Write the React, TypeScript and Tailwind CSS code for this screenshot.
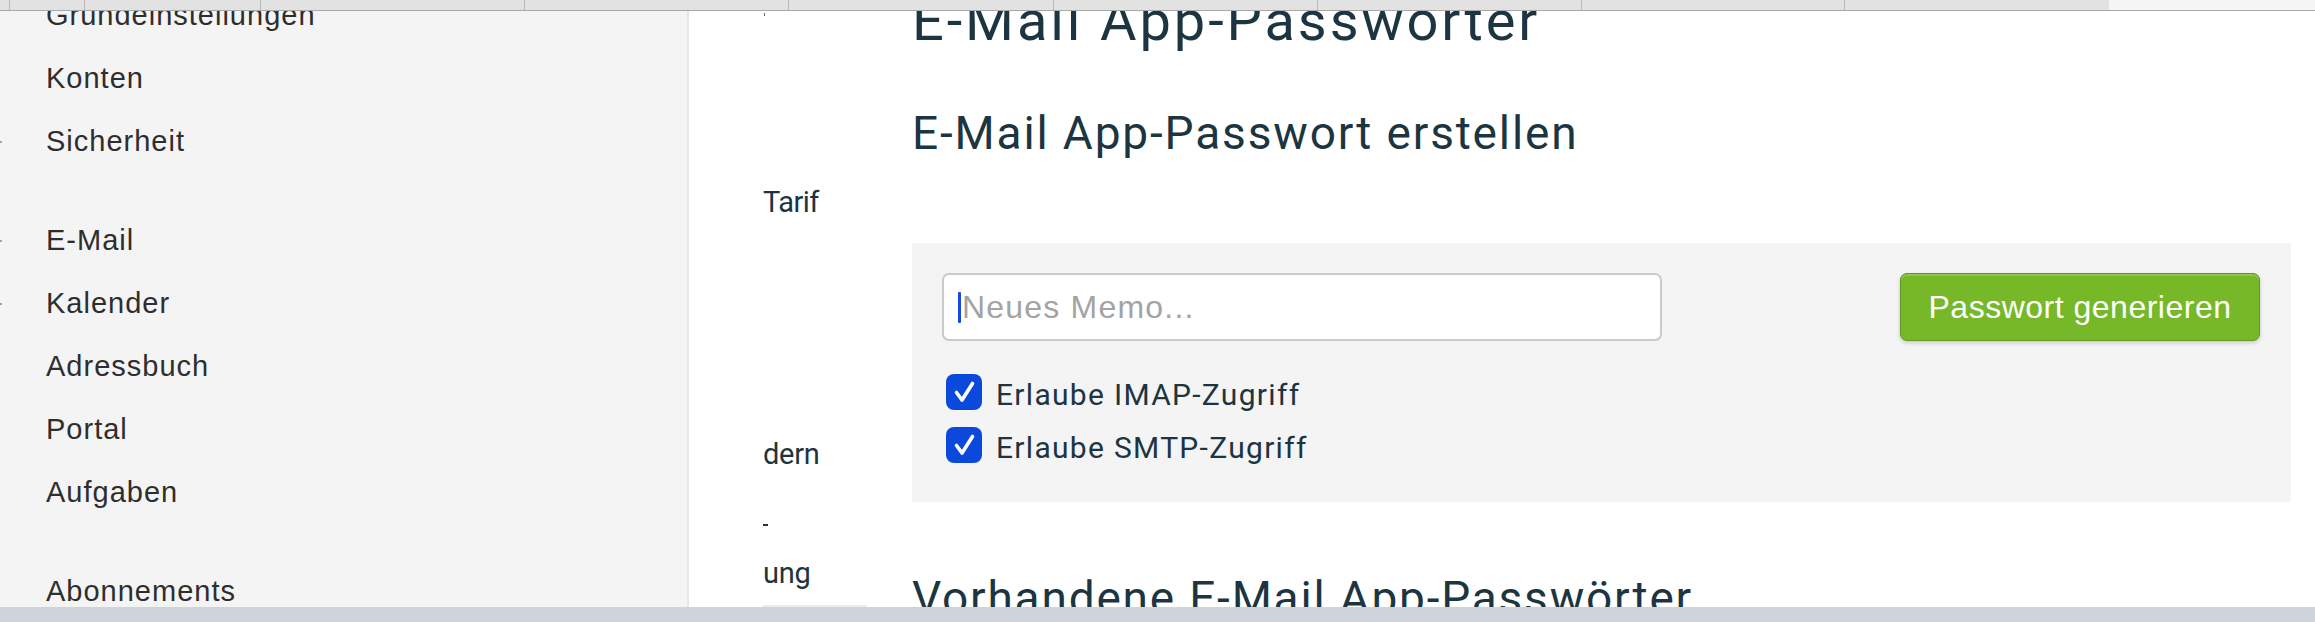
import React from "react";

const tabs: { w: string; noBorder?: boolean }[] = [
  { w: "w-[10px]" },
  { w: "w-[75px]" },
  { w: "w-[176px]" },
  { w: "w-[264px]" },
  { w: "w-[264px]" },
  { w: "w-[265px]" },
  { w: "w-[264px]" },
  { w: "w-[264px]" },
  { w: "w-[263px]" },
  { w: "w-[264px]", noBorder: true },
];

type Item = { label: string; dot?: boolean; gapBefore?: boolean };
const items: Item[] = [
  { label: "Grundeinstellungen" },
  { label: "Konten" },
  { label: "Sicherheit", dot: true },
  { label: "E-Mail", dot: true, gapBefore: true },
  { label: "Kalender", dot: true },
  { label: "Adressbuch" },
  { label: "Portal" },
  { label: "Aufgaben" },
  { label: "Abonnements", gapBefore: true },
];

function Check() {
  return (
    <div className="w-[36px] h-[36px] rounded-[8px] bg-[#0b49dd] flex items-center justify-center shrink-0">
      <svg width="36" height="36" viewBox="0 0 36 36">
        <path d="M10.5 18.5 L16 26 L26.5 9.5" fill="none" stroke="white" strokeWidth="3.6" strokeLinecap="round" strokeLinejoin="round" />
      </svg>
    </div>
  );
}

export default function App() {
  return (
    <div className="w-[2315px] h-[622px] overflow-hidden flex flex-col bg-white">
      {/* top tab strip */}
      <div className="h-[11px] shrink-0 flex border-b border-[#a9a9a9] bg-[#e2e2e2]">
        {tabs.map((t, i) => (
          <div key={i} className={`${t.w} h-full ${t.noBorder ? "" : "border-r border-[#b9b9b9]"}`} />
        ))}
        <div className="flex-1 h-full bg-[#f5f5f5]" />
      </div>

      {/* main */}
      <div className="flex-1 flex overflow-hidden">
        {/* sidebar */}
        <div className="w-[689px] shrink-0 bg-[#f4f4f4] border-r-2 border-[#e6e6e6] flex flex-col text-[29px] tracking-[1px] text-[#2e2e2e] font-['Liberation_Sans',Arial,sans-serif]">
          <div className="-mt-[27px] flex flex-col">
            {items.map((it) => (
              <div key={it.label} className={`h-[63px] flex items-center ${it.gapBefore ? "mt-[36px]" : ""}`}>
                {it.dot ? (
                  <>
                    <span className="w-[2px] h-[2px] rounded-full bg-[#8a8a8a]" />
                    <span className="ml-[44px] leading-[33px]">{it.label}</span>
                  </>
                ) : (
                  <span className="ml-[46px] leading-[33px]">{it.label}</span>
                )}
              </div>
            ))}
          </div>
        </div>

        {/* middle column */}
        <div className="w-[223px] shrink-0 bg-white flex flex-col pl-[74px] text-[29px] leading-[34px] text-[#1c3541] font-['Roboto',sans-serif]">
          <div className="mt-[2px] ml-[1px] w-[1px] h-[4px] bg-[#666]" />
          <div className="mt-[169px] tracking-[-0.5px]">Tarif</div>
          <div className="mt-[218px] tracking-[-0.3px]">dern</div>
          <div className="mt-[53px] w-[5px] h-[2px] bg-[#1c3541]" />
          <div className="mt-[30px] tracking-[-0.3px]">ung</div>
          <div className="mt-[15px] w-[104px] h-[3px] bg-[#ebebeb]" />
        </div>

        {/* content */}
        <div className="flex-1 flex flex-col pr-[24px] text-[#1c3541] font-['Roboto',sans-serif]">
          <h1 className="-mt-[23px] text-[56px] leading-[66px] tracking-[2.9px] whitespace-nowrap font-normal">E-Mail App-Passwörter</h1>
          <h2 className="mt-[52px] text-[46px] leading-[54px] tracking-[1.85px] whitespace-nowrap font-normal">E-Mail App-Passwort erstellen</h2>
          <div className="mt-[25px] h-[2px] bg-[#e3e3e3]" />
          <div className="mt-[58px] bg-[#f4f4f4] pl-[30px] pr-[31px] pt-[30px] pb-[39px]">
            <div className="flex justify-between items-start">
              <div className="w-[720px] h-[68px] bg-white border-2 border-[#cacaca] rounded-[7px] flex items-center pl-[14px]">
                <div className="w-[3px] h-[31px] bg-[#1947e5] rounded-[1px]" />
                <input
                  className="ml-[1px] flex-1 bg-transparent outline-none text-[32px] tracking-[1.2px] text-[#333] placeholder:text-[#a3a3a3] font-['Liberation_Sans',Arial,sans-serif]"
                  placeholder="Neues Memo..."
                />
              </div>
              <button className="w-[360px] h-[68px] rounded-[7px] bg-[#77b828] border border-[#5e9a1e] shadow-[0_2px_4px_rgba(0,0,0,0.18),inset_0_2px_0_rgba(255,255,255,0.18)] text-white text-[32px] tracking-[0.5px] font-['Liberation_Sans',Arial,sans-serif]">
                Passwort generieren
              </button>
            </div>
            <div className="mt-[33px] ml-[4px] flex flex-col gap-[17px]">
              <label className="flex items-center h-[36px]">
                <Check />
                <span className="ml-[14px] pt-[4px] text-[30px] tracking-[1.3px]">Erlaube IMAP-Zugriff</span>
              </label>
              <label className="flex items-center h-[36px]">
                <Check />
                <span className="ml-[14px] pt-[4px] text-[30px] tracking-[1.3px]">Erlaube SMTP-Zugriff</span>
              </label>
            </div>
          </div>
          <h2 className="mt-[69px] text-[46px] leading-[54px] tracking-[1.8px] whitespace-nowrap font-normal">Vorhandene E-Mail App-Passwörter</h2>
        </div>
      </div>

      {/* bottom bar */}
      <div className="h-[15px] shrink-0 bg-[#cfd3db]" />
    </div>
  );
}
